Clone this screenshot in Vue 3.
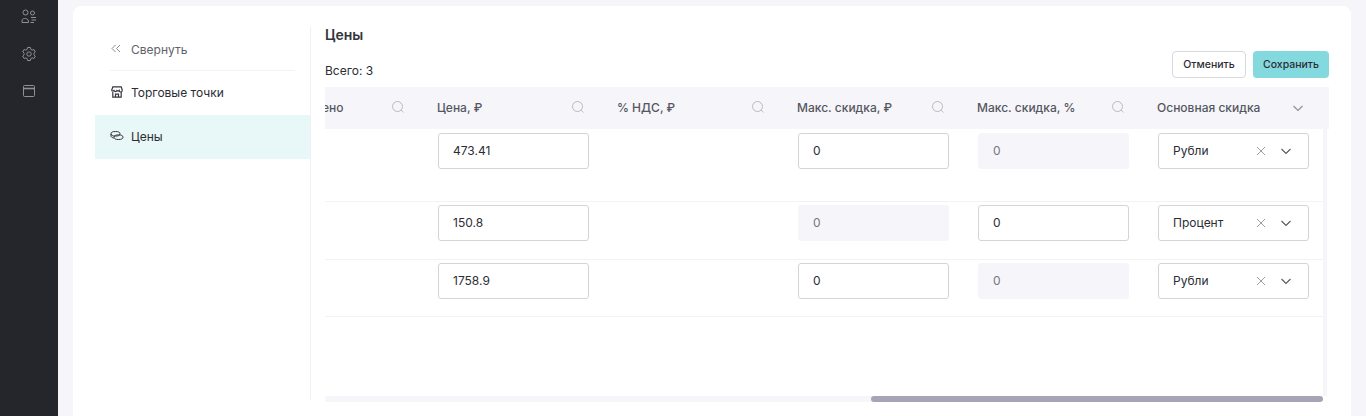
<script setup>
const columns = [
  { title: 'ено', search: true, clipped: true },
  { title: 'Цена, ₽', search: true },
  { title: '% НДС, ₽', search: true },
  { title: 'Макс. скидка, ₽', search: true },
  { title: 'Макс. скидка, %', search: true },
  { title: 'Основная скидка', search: false }
]

const rows = [
  { price: '473.41', rub: '0', pct: '0', rubOff: false, pctOff: true, type: 'Рубли', tall: true },
  { price: '150.8', rub: '0', pct: '0', rubOff: true, pctOff: false, type: 'Процент', tall: false },
  { price: '1758.9', rub: '0', pct: '0', rubOff: false, pctOff: true, type: 'Рубли', tall: false }
]
</script>

<template>
  <div class="page">
    <aside class="rail">
      <svg class="rail-icon" width="16" height="16" viewBox="0 0 16 16" fill="none" stroke="currentColor" stroke-width="1">
        <circle cx="4.5" cy="3.500" r="2.500" />
        <circle cx="11.500" cy="4" r="2" />
        <path d="M1 13.500h6.500c.3-2-.8-4-3.200-4H3.500C2 9.500 1 10.500 1 12z" />
        <path d="M10 8.500h5M10.500 11h4.500M9.500 13.500h3.500" />
      </svg>
      <svg class="rail-icon" width="16" height="16" viewBox="0 0 16 16" fill="none" stroke="currentColor" stroke-width="1">
        <circle cx="8" cy="8" r="2.200" />
        <path d="M6.600 1.500h2.800l.4 1.900 1.300.7 1.800-.6 1.400 2.400-1.400 1.300v1.600l1.400 1.300-1.400 2.400-1.800-.6-1.300.7-.4 1.900H6.600l-.4-1.900-1.300-.7-1.800.6-1.400-2.400 1.400-1.300V7.200L1.700 5.900l1.400-2.400 1.800.6 1.300-.7z" />
      </svg>
      <svg class="rail-icon" width="16" height="16" viewBox="0 0 16 16" fill="none" stroke="currentColor" stroke-width="1">
        <rect x="2.500" y="2.500" width="11" height="11" rx="1" />
        <path d="M2.500 5.500h11" stroke-width="1.600" />
      </svg>
    </aside>

    <main class="card">
      <nav class="menu">
        <div class="menu-item collapse">
          <svg width="12" height="12" viewBox="0 0 12 12" fill="none" stroke="#8a8c94" stroke-width="1">
            <path d="M5.500 2 2 5.500 5.500 9M10 2 6.500 5.500 10 9" />
          </svg>
          <span>Свернуть</span>
        </div>
        <div class="menu-item lifted">
          <svg width="14" height="14" viewBox="0 0 14 14" fill="none" stroke="#33353b" stroke-width="1.200">
            <path d="M2.800 1.800h8.400l1 3v.7a1.500 1.500 0 0 1-3 0 1.600 1.600 0 0 1-2.200 0 1.600 1.600 0 0 1-3 0 1.500 1.500 0 0 1-2.200 0v-.7z" />
            <path d="M2.800 7v5.200h8.400V7M5.500 12V9.200h3V12" />
          </svg>
          <span>Торговые точки</span>
        </div>
        <div class="menu-item lifted active">
          <svg width="14" height="14" viewBox="0 0 14 14" fill="none" stroke="#33353b" stroke-width="1">
            <ellipse cx="5.500" cy="4.800" rx="4.500" ry="2.300" />
            <ellipse cx="8.500" cy="8.200" rx="4.500" ry="2.300" />
            <path d="M1 5v2c0 1 1.200 1.800 2.800 2" />
          </svg>
          <span>Цены</span>
        </div>
      </nav>

      <section class="content">
        <h1 class="title">Цены</h1>
        <div class="toolbar">
          <span class="total">Всего: 3</span>
          <div class="actions">
            <button class="btn cancel">Отменить</button>
            <button class="btn save">Сохранить</button>
          </div>
        </div>

        <div class="thead">
          <div
            v-for="col in columns"
            :key="col.title"
            class="th"
            :class="{ clipped: col.clipped }"
          >
            <span class="th-text">{{ col.title }}</span>
            <svg v-if="col.search" width="14" height="14" viewBox="0 0 14 14" fill="none" stroke="#b9bac2" stroke-width="1">
              <circle cx="6.500" cy="6.500" r="5" />
              <path d="M10.200 10.200 12.500 12.500" />
            </svg>
            <svg v-else class="th-chevron" width="12" height="12" viewBox="0 0 12 12" fill="none" stroke="#8d8e97" stroke-width="1.100">
              <path d="M1.500 4 6 8.500 10.500 4" />
            </svg>
          </div>
        </div>

        <div class="tbody-wrap">
          <div class="tbody">
            <div v-for="row in rows" :key="row.price" class="tr" :class="{ tall: row.tall }">
              <div class="td clipped"></div>
              <div class="td"><div class="field">{{ row.price }}</div></div>
              <div class="td"></div>
              <div class="td"><div class="field" :class="{ off: row.rubOff }">{{ row.rub }}</div></div>
              <div class="td"><div class="field" :class="{ off: row.pctOff }">{{ row.pct }}</div></div>
              <div class="td">
                <div class="field select">
                  <span class="select-value">{{ row.type }}</span>
                  <svg width="10" height="10" viewBox="0 0 10 10" fill="none" stroke="#9a9ba3" stroke-width="1">
                    <path d="M1 1l8 8M9 1 1 9" />
                  </svg>
                  <svg width="12" height="12" viewBox="0 0 12 12" fill="none" stroke="#55575e" stroke-width="1.100">
                    <path d="M1.500 4 6 8.500 10.500 4" />
                  </svg>
                </div>
              </div>
            </div>
          </div>
          <div class="vtrack"></div>
        </div>

        <div class="htrack"><div class="hthumb"></div></div>
      </section>
    </main>
  </div>
</template>

<style>
html, body { margin: 0; background: #f5f5fa; overflow: hidden; }
</style>

<style scoped>
.page {
  display: flex;
  height: 416px;
  overflow: hidden;
  font-family: Inter, "Noto Sans", sans-serif;
  font-size: 12px;
  color: #2b2d33;
  background: #f5f5fa;
}

.rail {
  width: 58px;
  flex: none;
  box-sizing: border-box;
  padding-top: 9px;
  background: #24262c;
  color: #8f9198;
  display: flex;
  flex-direction: column;
  align-items: center;
  gap: 21px;
}

.card {
  flex: none;
  width: 1278px;
  height: 410px;
  margin: 6px 0 0 15px;
  box-sizing: border-box;
  padding: 21px 22px 0;
  display: flex;
  background: #fff;
  border-radius: 8px 8px 0 0;
}

.menu {
  width: 215px;
  height: 373px;
  flex: none;
  border-right: 1px solid #f1f1f5;
}
.menu-item {
  height: 44px;
  box-sizing: border-box;
  padding-left: 15px;
  display: flex;
  align-items: center;
  gap: 7px;
}
.menu-item svg { flex: none; }
.lifted { padding-bottom: 2px; }
.collapse { color: #60626a; position: relative; gap: 9px; }
.collapse::after {
  content: '';
  position: absolute;
  left: 15px;
  right: 15px;
  bottom: 0;
  height: 1px;
  background: #f3f3f6;
}
.active { background: #e8f7f7; }

.content {
  width: 1004px;
  margin-left: 14px;
  flex: none;
}
.title {
  margin: 0;
  height: 16px;
  line-height: 16px;
  font-size: 14px;
  font-weight: 600;
  color: #33353b;
}
.toolbar {
  display: flex;
  justify-content: space-between;
  align-items: flex-end;
  margin-top: 8px;
  height: 27px;
}
.total { line-height: 14px; }
.actions { display: flex; gap: 7px; }
.btn {
  height: 27px;
  padding: 0;
  border-radius: 4px;
  font-family: inherit;
  font-size: 10.5px;
  font-weight: 500;
  color: #2b2d33;
}
.cancel { width: 74px; background: #fff; border: 1px solid #d8d9de; }
.save { width: 76px; background: #84d9df; border: none; }

.thead {
  display: flex;
  height: 42px;
  margin-top: 9px;
  background: #f5f5fa;
  overflow: hidden;
}
.th {
  width: 180px;
  flex: none;
  box-sizing: border-box;
  padding: 0 17px 2px 15px;
  display: flex;
  align-items: center;
  justify-content: space-between;
}
.th.clipped { width: 97px; padding: 0 17px 2px 0; }
.th.clipped .th-text { margin-left: -3px; }
.th-chevron { margin: 2px 1px 0 0; }
.th-text { font-weight: 500; color: #55575f; }

.tbody-wrap { display: flex; height: 267px; }
.tbody { width: 998px; overflow: hidden; }
.vtrack { width: 4px; background: #f5f5fa; }

.tr { display: flex; height: 58px; box-sizing: border-box; }
.tr.tall { height: 72px; }
.tr + .tr { border-top: 1px solid #f3f3f6; }
.tr + .tr .td { padding-top: 3px; }
.tr:last-child { border-bottom: 1px solid #f3f3f6; }
.td { width: 180px; flex: none; box-sizing: border-box; padding: 4px 14px 0 16px; }
.td.clipped { width: 97px; padding: 0; }

.field {
  width: 151px;
  height: 36px;
  box-sizing: border-box;
  padding: 0 14px 2px;
  display: flex;
  align-items: center;
  background: #fff;
  border: 1px solid #d3d4d9;
  border-radius: 3px;
  color: #2b2d33;
}
.field.off {
  background: #f5f5fa;
  border-color: #f5f5fa;
  color: #75777f;
}
.select { gap: 14px; padding: 0 16px 0 14px; }
.select-value { flex: 1; margin-bottom: 2px; }

.htrack {
  width: 998px;
  height: 6px;
  background: #f5f5fa;
  border-radius: 3px;
  display: flex;
  justify-content: flex-end;
}
.hthumb { width: 452px; height: 6px; background: #a5a5b7; border-radius: 3px; }
</style>
